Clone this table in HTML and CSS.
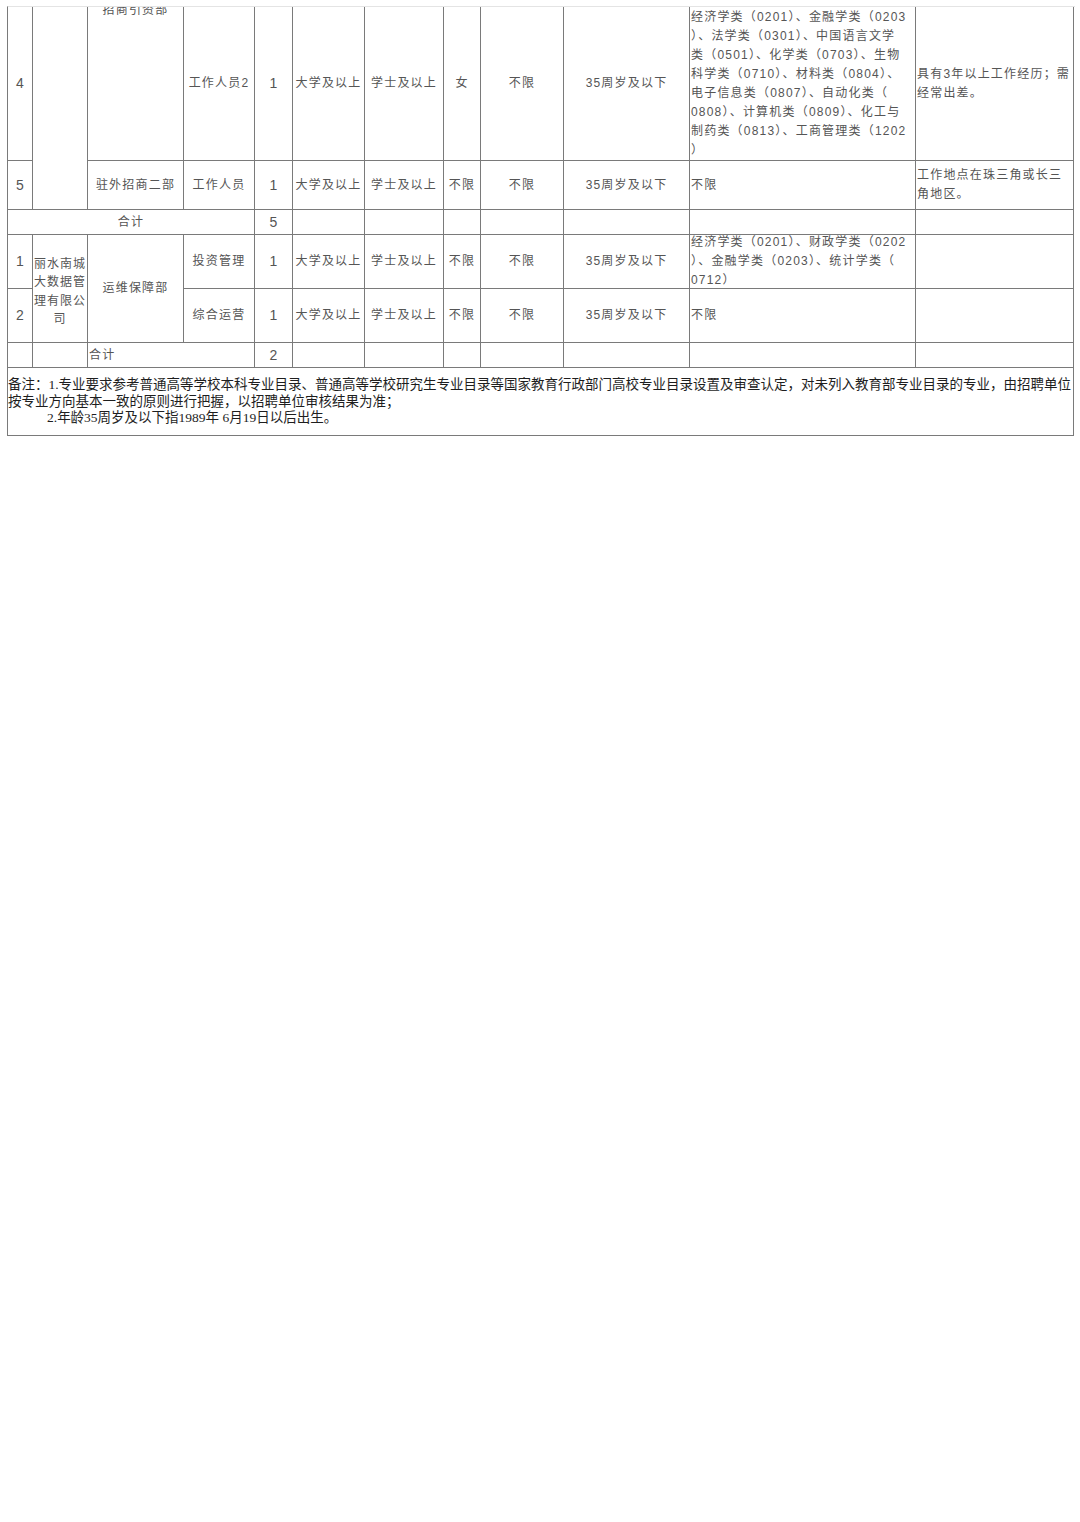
FILE: index.html
```html
<!DOCTYPE html>
<html lang="zh-CN">
<head>
<meta charset="utf-8">
<title>招聘岗位表</title>
<link rel="stylesheet" href="styles.css">
</head>
<body>
<div class="page">
  <div class="sheet">
    <!-- row 4 -->
    <div class="cell num">4</div>
    <div class="cell span2r"></div>
    <div class="cell top"><div class="clipped">招商引资部</div></div>
    <div class="cell">工作人员2</div>
    <div class="cell num">1</div>
    <div class="cell">大学及以上</div>
    <div class="cell">学士及以上</div>
    <div class="cell">女</div>
    <div class="cell">不限</div>
    <div class="cell">35周岁及以下</div>
    <div class="cell left"><div class="lines">经济学类（0201）、金融学类（0203<br>）、法学类（0301）、中国语言文学<br>类（0501）、化学类（0703）、生物<br>科学类（0710）、材料类（0804）、<br>电子信息类（0807）、自动化类（<br>0808）、计算机类（0809）、化工与<br>制药类（0813）、工商管理类（1202<br>）</div></div>
    <div class="cell left"><div class="lines">具有3年以上工作经历；需<br>经常出差。</div></div>

    <!-- row 5 -->
    <div class="cell num">5</div>
    <div class="cell">驻外招商二部</div>
    <div class="cell">工作人员</div>
    <div class="cell num">1</div>
    <div class="cell">大学及以上</div>
    <div class="cell">学士及以上</div>
    <div class="cell">不限</div>
    <div class="cell">不限</div>
    <div class="cell">35周岁及以下</div>
    <div class="cell left">不限</div>
    <div class="cell left"><div class="lines">工作地点在珠三角或长三<br>角地区。</div></div>

    <!-- subtotal -->
    <div class="cell span4c">合计</div>
    <div class="cell num">5</div>
    <div class="cell"></div>
    <div class="cell"></div>
    <div class="cell"></div>
    <div class="cell"></div>
    <div class="cell"></div>
    <div class="cell"></div>
    <div class="cell"></div>

    <!-- row 1 -->
    <div class="cell num">1</div>
    <div class="cell span2r"><div class="company">丽水南城<br>大数据管<br>理有限公<br>司</div></div>
    <div class="cell span2r">运维保障部</div>
    <div class="cell">投资管理</div>
    <div class="cell num">1</div>
    <div class="cell">大学及以上</div>
    <div class="cell">学士及以上</div>
    <div class="cell">不限</div>
    <div class="cell">不限</div>
    <div class="cell">35周岁及以下</div>
    <div class="cell left"><div class="lines">经济学类（0201）、财政学类（0202<br>）、金融学类（0203）、统计学类（<br>0712）</div></div>
    <div class="cell"></div>

    <!-- row 2 -->
    <div class="cell num">2</div>
    <div class="cell">综合运营</div>
    <div class="cell num">1</div>
    <div class="cell">大学及以上</div>
    <div class="cell">学士及以上</div>
    <div class="cell">不限</div>
    <div class="cell">不限</div>
    <div class="cell">35周岁及以下</div>
    <div class="cell left">不限</div>
    <div class="cell"></div>

    <!-- subtotal -->
    <div class="cell"></div>
    <div class="cell"></div>
    <div class="cell span2c left">合计</div>
    <div class="cell num">2</div>
    <div class="cell"></div>
    <div class="cell"></div>
    <div class="cell"></div>
    <div class="cell"></div>
    <div class="cell"></div>
    <div class="cell"></div>
    <div class="cell"></div>

    <!-- notes -->
    <div class="cell notes">
      <div class="note-line">备注：1.专业要求参考普通高等学校本科专业目录、普通高等学校研究生专业目录等国家教育行政部门高校专业目录设置及审查认定，对未列入教育部专业目录的专业，由招聘单位</div>
      <div class="note-line">按专业方向基本一致的原则进行把握，以招聘单位审核结果为准；</div>
      <div class="note-line indent">2.年龄35周岁及以下指1989年 6月19日以后出生。</div>
    </div>
  </div>
</div>
</body>
</html>
```

FILE: styles.css
```css
html, body {
  margin: 0;
  padding: 0;
  background: #ffffff;
}

.page {
  padding: 6px 0 0 7px;
  width: 1080px;
  height: 1522px;
  box-sizing: border-box;
}

.sheet {
  display: grid;
  grid-template-columns: 25px 55px 96px 71px 38px 72px 79px 37px 83px 126px 226px 158px;
  grid-template-rows: 154px 49px 25px 54px 54px 25px 68px;
  width: 1067px;
  border-left: 1px solid #7a7a7a;
  border-top: 1px solid #e4e4e4;
  font-family: "Liberation Sans", "Noto Sans CJK SC", sans-serif;
  font-size: 12px;
  letter-spacing: 1.2px;
  color: #555555;
}

.cell {
  box-sizing: border-box;
  border-right: 1px solid #7a7a7a;
  border-bottom: 1px solid #7a7a7a;
  display: flex;
  align-items: center;
  justify-content: center;
  text-align: center;
  overflow: hidden;
  line-height: 19px;
  white-space: nowrap;
  min-width: 0;
  min-height: 0;
}

.cell.num {
  font-size: 14px;
  letter-spacing: 0;
}

.cell.left {
  justify-content: flex-start;
  text-align: left;
  padding-left: 1px;
}

.cell.top {
  align-items: flex-start;
}

.clipped {
  margin-top: -6px;
}

.span2r {
  grid-row: span 2;
}

.span4c {
  grid-column: span 4;
}

.span2c {
  grid-column: span 2;
}

.company {
  line-height: 18.5px;
  letter-spacing: 1px;
  padding-top: 6px;
}

.lines {
  line-height: 19px;
}

.notes {
  grid-column: 1 / -1;
  display: block;
  padding: 9px 0 0 0;
  font-family: "Liberation Serif", "Noto Sans CJK SC", serif;
  font-size: 13.5px;
  letter-spacing: 0;
  line-height: 16.5px;
  color: #1e1e1e;
  text-align: left;
}

.note-line {
  white-space: nowrap;
}

.note-line.indent {
  padding-left: 39px;
}
```
